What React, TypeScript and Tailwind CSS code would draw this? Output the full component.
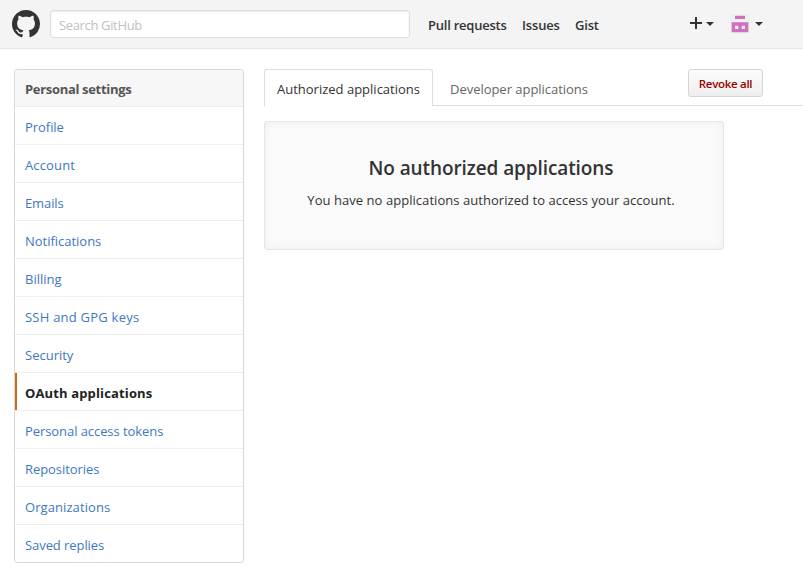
import type { ReactNode } from 'react';

const menu = [
  { label: 'Profile', spacing: 'tracking-[-0.05px]' },
  { label: 'Account', spacing: 'tracking-[0.15px]' },
  { label: 'Emails', spacing: 'tracking-[-0.1px]' },
  { label: 'Notifications', spacing: 'tracking-[-0.02px]' },
  { label: 'Billing', spacing: 'tracking-normal' },
  { label: 'SSH and GPG keys', spacing: 'tracking-[0.23px]' },
  { label: 'Security', spacing: 'tracking-normal' },
  { label: 'OAuth applications', spacing: 'tracking-[0.14px]', selected: true },
  { label: 'Personal access tokens', spacing: 'tracking-[-0.07px]' },
  { label: 'Repositories', spacing: 'tracking-[-0.07px]' },
  { label: 'Organizations', spacing: 'tracking-[0.08px]' },
  { label: 'Saved replies', spacing: 'tracking-[-0.07px]' },
];

function Caret() {
  return <span className="block size-0 border-x-4 border-t-4 border-x-transparent border-t-[#333]" />;
}

function Mark() {
  return (
    <svg viewBox="0 0 16 16" className="size-7 shrink-0" fill="#333">
      <path d="M8 0C3.58 0 0 3.58 0 8c0 3.54 2.29 6.53 5.47 7.59.4.07.55-.17.55-.38 0-.19-.01-.82-.01-1.49-2.01.37-2.53-.49-2.69-.94-.09-.23-.48-.94-.82-1.13-.28-.15-.68-.52-.01-.53.63-.01 1.08.58 1.23.82.72 1.21 1.87.87 2.33.66.07-.52.28-.87.51-1.07-1.78-.2-3.64-.89-3.64-3.95 0-.87.31-1.59.82-2.15-.08-.2-.36-1.02.08-2.12 0 0 .67-.21 2.2.82.64-.18 1.32-.27 2-.27s1.36.09 2 .27c1.53-1.04 2.2-.82 2.2-.82.44 1.1.16 1.92.08 2.12.51.56.82 1.27.82 2.15 0 3.07-1.87 3.75-3.65 3.95.29.25.54.73.54 1.48 0 1.07-.01 1.93-.01 2.2 0 .21.15.46.55.38A8.01 8.01 0 0 0 16 8c0-4.42-3.58-8-8-8z" />
    </svg>
  );
}

function Avatar() {
  return (
    <svg viewBox="0 0 60 60" className="size-5 shrink-0">
      <rect width="60" height="60" rx="8" fill="#f0f0f0" />
      <path fill="#cf6fbd" fillRule="evenodd" d="M15 5h30v10H15zM5 25h50v30H5zM15 35v10h10V35zM35 35v10h10V35z" />
    </svg>
  );
}

function NavLink({ children, className }: { children: ReactNode; className: string }) {
  return <a className={`text-[13px] leading-5 font-semibold whitespace-nowrap ${className}`}>{children}</a>;
}

export default function App() {
  return (
    <div className="h-[573px] w-[803px] overflow-hidden bg-white font-['Open_Sans','Noto_Sans',sans-serif] text-[13px] text-[#333]">
      <header className="flex h-[49px] items-start border-b border-[#e5e5e5] bg-[#f4f4f4] pl-3">
        <div className="pt-[10px]">
          <Mark />
        </div>
        <input
          placeholder="Search GitHub"
          className="mt-[10px] ml-[10px] h-7 w-[360px] rounded-[3px] border border-[#ddd] bg-white px-2 pt-[2px] text-[13px] tracking-[-0.35px] shadow-[inset_0_1px_2px_rgba(0,0,0,0.075)] outline-none placeholder:text-[#c0c0c0]"
        />
        <nav className="mt-[15px] ml-[18px] flex w-[262px]">
          <NavLink className="w-[94px] tracking-[-0.24px]">Pull requests</NavLink>
          <NavLink className="w-[53px] tracking-[-0.15px]">Issues</NavLink>
          <NavLink className="tracking-[-0.2px]">Gist</NavLink>
        </nav>
        <div className="mt-[14px] flex h-5 items-center">
          <svg viewBox="0 0 12 12" className="mb-[2px] size-3" fill="#333">
            <path d="M5 0h2v5h5v2H7v5H5V7H0V5h5z" />
          </svg>
          <span className="mr-4 ml-1">
            <Caret />
          </span>
          <Avatar />
          <span className="ml-[5px]">
            <Caret />
          </span>
        </div>
      </header>

      <div className="flex gap-5 pt-5 pl-[14px]">
        <aside className="h-[494px] w-[230px] shrink-0 overflow-hidden rounded-[3px] border border-[#d8d8d8]">
          <h2 className="h-[37px] border-b border-[#eee] bg-[#f7f7f7] pl-[10px] leading-[38px] font-bold tracking-[-0.32px] text-[#555]">
            Personal settings
          </h2>
          {menu.map(({ label, spacing, selected }) => (
            <a
              key={label}
              className={`block h-[38px] border-b border-b-[#eee] pl-[10px] leading-[41px] last:h-[37px] last:border-b-0 ${spacing} ${
                selected ? 'bg-[linear-gradient(#d26911,#d26911)] bg-[length:2px_100%] bg-no-repeat font-bold text-[#222]' : 'text-[#4078c0]'
              }`}
            >
              {label}
            </a>
          ))}
        </aside>

        <main className="min-w-0 flex-1">
          <div className="flex h-[37px] items-start">
            <a className="h-[37px] w-[169px] rounded-t-[3px] border border-b-0 border-[#ddd] pl-3 leading-[38px] whitespace-nowrap text-[#333]">
              Authorized applications
            </a>
            <div className="flex h-[37px] flex-1 items-start border-b border-[#ddd]">
              <a className="w-[255px] pl-[17px] leading-10 tracking-[-0.03px] whitespace-nowrap text-[#666]">Developer applications</a>
              <button className="h-7 w-[75px] rounded-[3px] border border-[#d5d5d5] bg-linear-to-b from-[#fcfcfc] to-[#eee] pt-px text-[11.5px] leading-none font-semibold tracking-[-0.3px] whitespace-nowrap text-[#900]">
                Revoke all
              </button>
            </div>
          </div>
          <section className="mt-[15px] h-[129px] w-[460px] rounded-[3px] border border-[#e5e5e5] bg-[#fafafa] pt-[31px] pr-[6px] text-center shadow-[inset_0_0_10px_rgba(0,0,0,0.05)]">
            <h3 className="text-[19px] leading-[30px] font-semibold tracking-[-0.1px]">No authorized applications</h3>
            <p className="mt-[7px] leading-5 tracking-[0.05px]">You have no applications authorized to access your account.</p>
          </section>
        </main>
      </div>
    </div>
  );
}
